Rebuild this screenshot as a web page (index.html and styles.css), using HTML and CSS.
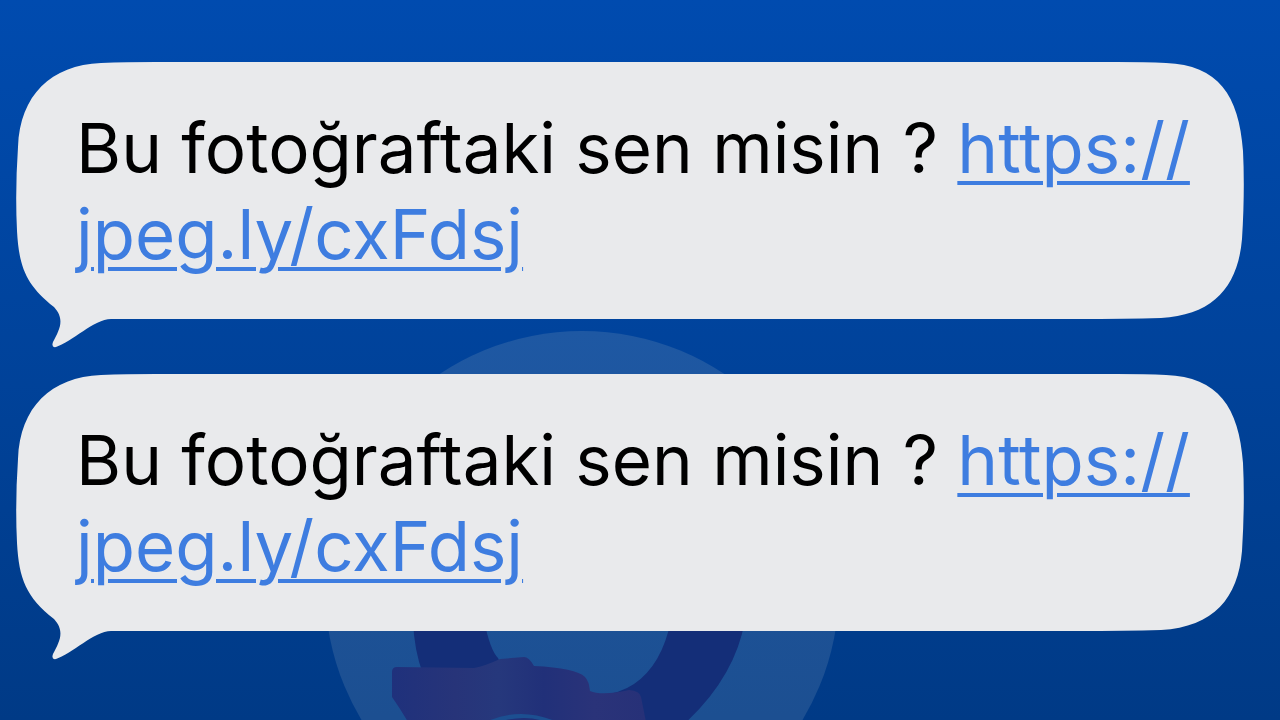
FILE: index.html
```
<!DOCTYPE html>
<html lang="tr">
<head>
<meta charset="utf-8">
<meta name="viewport" content="width=device-width, initial-scale=1">
<title>Mesajlar</title>
<link rel="stylesheet" href="styles.css">
</head>
<body>
<svg class="emblem" viewBox="324 330 520 390" aria-hidden="true">
<defs>
<linearGradient id="disc" x1="0" y1="0" x2="0" y2="1"><stop offset="0" stop-color="#1e58a3"/><stop offset="0.75" stop-color="#1c4f91"/></linearGradient>
<linearGradient id="figure" gradientUnits="userSpaceOnUse" x1="392" y1="0" x2="645" y2="0"><stop offset="0" stop-color="#1f317c"/><stop offset="0.25" stop-color="#273479"/><stop offset="0.42" stop-color="#26387c"/><stop offset="0.6" stop-color="#213079"/><stop offset="0.8" stop-color="#2a3379"/><stop offset="1" stop-color="#273178"/></linearGradient>
</defs>
<circle cx="582" cy="588" r="257" fill="url(#disc)"/>
<path d="M413 620 Q414 650 423 674 H505 L498 658 Q490 650 484 620Z" fill="#142e78"/>
<path d="M671 620 Q662 665 634 684 Q619 694 600 695 L640 725 H683 Q735 678 745 620Z" fill="#142e78"/>
<path d="M392 672 Q392 667 397 667 L474 668 Q485 666 500 659 L524 657 Q529 657 534 666 Q576 668 585 677 Q589 681 590 691 Q602 696 629 690 Q640 691 641 697 L646 722 H408 Q401 710 392 697Z" fill="url(#figure)"/>
<path d="M488 721 Q521 707 555 721Z" fill="#1c4f91"/>
<path d="M498 722 Q526 714 546 722Z" fill="#213079"/>
</svg>
<main class="messages">
<article class="bubble">
<svg class="shape" viewBox="0 0 1228 288" preserveAspectRatio="none" aria-hidden="true"><path d="M85 2 Q110 1 140 1 H1100 Q1130 1 1150 2 C1202 4 1223 34 1227 90 Q1229 130 1226 178 C1222 225 1198 254 1145 257 Q1110 258 1060 258 H95 C78 258 56 281 40 286 Q35 287 37 281 C44 268 49 258 38 246 C10 224 3 206 1 170 Q-1 130 2 86 C4 34 35 4 85 2Z"/></svg>
<p class="text">Bu fotoğraftaki sen misin ? <a href="https://jpeg.ly/cxFdsj">https://<wbr>jpeg.ly/cxFdsj</a></p>
</article>
<article class="bubble">
<svg class="shape" viewBox="0 0 1228 288" preserveAspectRatio="none" aria-hidden="true"><path d="M85 2 Q110 1 140 1 H1100 Q1130 1 1150 2 C1202 4 1223 34 1227 90 Q1229 130 1226 178 C1222 225 1198 254 1145 257 Q1110 258 1060 258 H95 C78 258 56 281 40 286 Q35 287 37 281 C44 268 49 258 38 246 C10 224 3 206 1 170 Q-1 130 2 86 C4 34 35 4 85 2Z"/></svg>
<p class="text">Bu fotoğraftaki sen misin ? <a href="https://jpeg.ly/cxFdsj">https://<wbr>jpeg.ly/cxFdsj</a></p>
</article>
</main>
</body>
</html>
```
FILE: styles.css
```
* { box-sizing: border-box; }
body { margin: 0; min-height: 100vh; position: relative; overflow-x: hidden; font-family: Inter, "Liberation Sans", sans-serif; background: linear-gradient(#004baf, #003a86); }
.emblem { position: absolute; left: 324px; top: 330px; width: 520px; height: 390px; }
.messages { position: relative; display: flex; flex-direction: column; gap: 24px; padding: 61px 36px 59px 16px; }
.bubble { position: relative; min-height: 288px; padding: 44px 20px 70px 60px; }
.shape { position: absolute; inset: 0; width: 100%; height: 100%; fill: #e9eaec; }
.text { position: relative; margin: 0; font-size: 69px; line-height: 86px; color: #000; }
.text a { color: #3e7de0; text-decoration-thickness: 4px; text-underline-offset: 8px; }
```
